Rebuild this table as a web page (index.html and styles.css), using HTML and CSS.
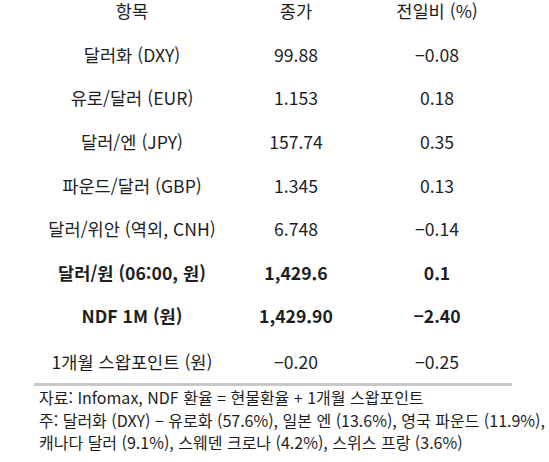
FILE: index.html
```html
<!DOCTYPE html>
<html lang="ko">
<head>
<meta charset="utf-8">
<link rel="stylesheet" href="styles.css">
</head>
<body>
<div class="page">
  <table class="fx">
    <thead>
      <tr class="head"><th>항목</th><th>종가</th><th>전일비 (%)</th></tr>
    </thead>
    <tbody>
      <tr><td>달러화 (DXY)</td><td>99.88</td><td>−0.08</td></tr>
      <tr><td>유로/달러 (EUR)</td><td>1.153</td><td>0.18</td></tr>
      <tr><td>달러/엔 (JPY)</td><td>157.74</td><td>0.35</td></tr>
      <tr><td>파운드/달러 (GBP)</td><td>1.345</td><td>0.13</td></tr>
      <tr><td>달러/위안 (역외, CNH)</td><td>6.748</td><td>−0.14</td></tr>
      <tr class="strong"><td>달러/원 (06:00, 원)</td><td>1,429.6</td><td>0.1</td></tr>
      <tr class="strong"><td>NDF 1M (원)</td><td>1,429.90</td><td>−2.40</td></tr>
      <tr class="last"><td>1개월 스왑포인트 (원)</td><td>−0.20</td><td>−0.25</td></tr>
    </tbody>
  </table>
  <div class="notes">
    <p>자료: Infomax, NDF 환율 = 현물환율 + 1개월 스왑포인트</p>
    <p>주: 달러화 (DXY) − 유로화 (57.6%), 일본 엔 (13.6%), 영국 파운드 (11.9%),</p>
    <p>캐나다 달러 (9.1%), 스웨덴 크로나 (4.2%), 스위스 프랑 (3.6%)</p>
  </div>
</div>
</body>
</html>
```

FILE: styles.css
```css
html, body {
  margin: 0;
  padding: 0;
  background: #ffffff;
}
body {
  font-family: "Noto Sans CJK KR", "Noto Sans", sans-serif;
  color: #1e1e1e;
}
.page {
  padding-left: 34px;
  width: 478px;
}
.fx {
  width: 478px;
  border-collapse: collapse;
  table-layout: fixed;
  font-size: 17.6px;
}
.fx th, .fx td {
  padding: 0;
  text-align: center;
  font-weight: 400;
  white-space: nowrap;
  line-height: 20px;
  height: 43.6px;
}
.fx .head th {
  height: 33px;
  line-height: 22px;
  vertical-align: top;
}
.fx th:nth-child(1), .fx td:nth-child(1) { width: 196px; }
.fx th:nth-child(2), .fx td:nth-child(2) { width: 132px; }
.fx th:nth-child(3), .fx td:nth-child(3) { width: 150px; }
.fx tr.strong td {
  font-weight: 700;
}
.fx tr.last td {
  border-bottom: 3px solid #c8c8c8;
  height: 43px;
  padding-top: 2px;
}
.notes {
  padding-left: 5px;
  font-size: 16px;
  white-space: nowrap;
}
.notes p {
  margin: 0;
  line-height: 22.5px;
}
```
